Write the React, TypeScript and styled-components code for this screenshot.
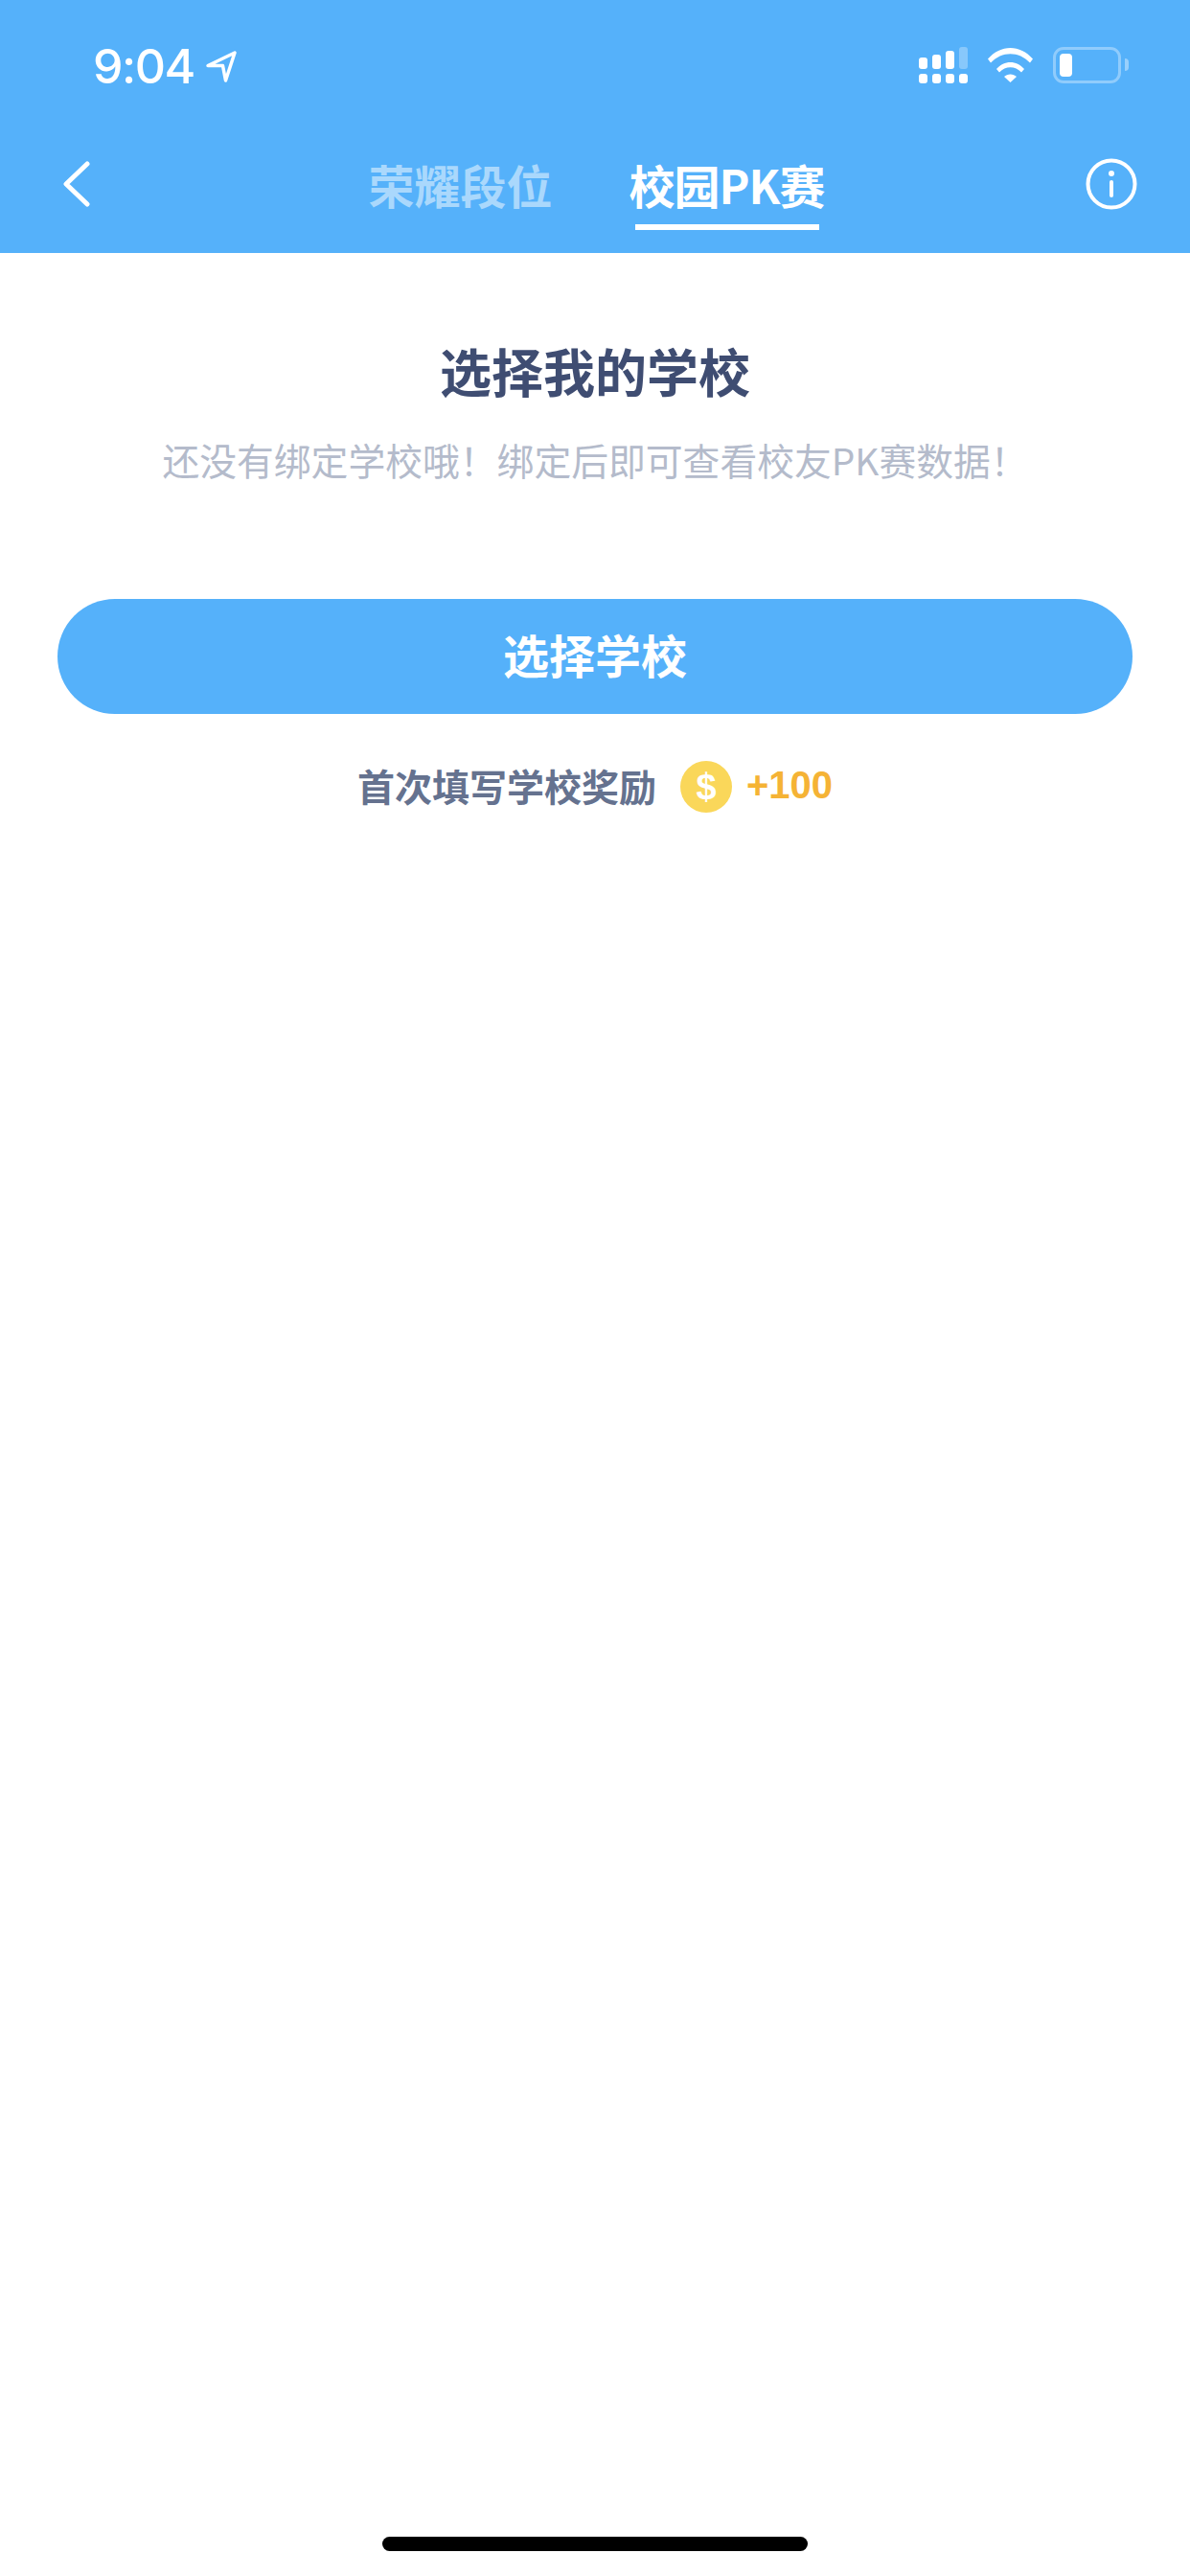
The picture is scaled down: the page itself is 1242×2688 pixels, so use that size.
import React from "react";
import styled, { createGlobalStyle } from "styled-components";

const CJK = `"Noto Sans CJK SC", "Noto Sans", sans-serif`;

const GlobalStyle = createGlobalStyle`
	html, body {
		margin: 0;
		padding: 0;
		background: #fff;
	}
`;

const signalBars = [12, 15, 19, 23];

function SignalIcon() {
	return (
		<svg width="51" height="38" viewBox="0 0 51 38" fill="#fff">
			{signalBars.map((h, i) => (
				<React.Fragment key={i}>
					<rect
						x={i * 14}
						y={23 - h}
						width="9"
						height={h}
						rx="3"
						opacity={i === 3 ? 0.3 : 1}
					/>
					<rect x={i * 14} y="28" width="9" height="10" rx="3" />
				</React.Fragment>
			))}
		</svg>
	);
}

export default function App() {
	return (
		<Page>
			<GlobalStyle />
			<Header>
				<StatusBar>
					<TimeGroup>
						<Time>9:04</Time>
						<svg width="32" height="33" viewBox="0 0 32 33" fill="none">
							<path
								d="M2 15.5 30 2 20.5 31 17.5 15.5Z"
								stroke="#fff"
								strokeWidth="3.5"
								strokeLinejoin="round"
							/>
						</svg>
					</TimeGroup>
					<StatusIcons>
						<SignalIcon />
						<svg width="47" height="37" viewBox="0 0 47 37" fill="#fff">
							<path d="M0 12.5C13-3 34-3 47 12.5L44 16.5C32.5 4 14.500 4 3 16.500Z" />
							<path d="M9 23C17 13.500 30 13.500 38 23L35 26.500C28.500 19.500 18.500 19.500 12 26.500Z" />
							<path d="M17 31C20.500 27.500 26.500 27.500 30 31L23.500 37Z" />
						</svg>
						<Battery>
							<BatteryLevel />
						</Battery>
					</StatusIcons>
				</StatusBar>
				<Nav>
					<BackSlot>
						<svg width="28" height="48" viewBox="0 0 28 48" fill="none">
							<path
								d="M25 3 3 24 25 45"
								stroke="#fff"
								strokeWidth="5"
								strokeLinecap="round"
								strokeLinejoin="round"
							/>
						</svg>
					</BackSlot>
					<Tabs>
						<Tab>
							<TabLabel>荣耀段位</TabLabel>
							<TabMark />
						</Tab>
						<Tab $active>
							<TabLabel $tight>校园PK赛</TabLabel>
							<TabMark $active />
						</Tab>
					</Tabs>
					<InfoSlot>
						<svg width="54" height="54" viewBox="0 0 54 54" fill="none">
							<circle cx="27" cy="27" r="24.500" stroke="#fff" strokeWidth="4" />
							<circle cx="27" cy="16" r="3" fill="#fff" />
							<path d="M27 25V39" stroke="#fff" strokeWidth="4" strokeLinecap="round" />
						</svg>
					</InfoSlot>
				</Nav>
			</Header>
			<Content>
				<Title>选择我的学校</Title>
				<Subtitle>还没有绑定学校哦！绑定后即可查看校友PK赛数据！</Subtitle>
				<PrimaryButton type="button">选择学校</PrimaryButton>
				<Reward>
					<RewardLabel>首次填写学校奖励</RewardLabel>
					<Coin>$</Coin>
					<RewardAmount>+100</RewardAmount>
				</Reward>
			</Content>
			<HomeIndicator />
		</Page>
	);
}

const Page = styled.div`
	display: flex;
	flex-direction: column;
	width: 1242px;
	height: 2688px;
	overflow: hidden;
	background: #fff;
	font-family: ${CJK};
`;

const Header = styled.header`
	height: 264px;
	flex: none;
	background: #55b1fa;
	box-sizing: border-box;
`;

const StatusBar = styled.div`
	display: flex;
	justify-content: space-between;
	align-items: flex-start;
	height: 160px;
	box-sizing: border-box;
	padding: 49px 64px 0 97px;
`;

const TimeGroup = styled.div`
	display: flex;
	align-items: center;
	gap: 12px;
	height: 40px;
`;

const Time = styled.span`
	font-family: Inter, "Liberation Sans", sans-serif;
	font-size: 50px;
	font-weight: 500;
	letter-spacing: -1.500px;
	color: #fff;
`;

const StatusIcons = styled.div`
	display: flex;
	align-items: flex-start;
	gap: 21px;
`;

const Battery = styled.div`
	position: relative;
	width: 71px;
	height: 38px;
	box-sizing: border-box;
	padding: 4px;
	border: 3px solid rgba(255, 255, 255, 0.35);
	border-radius: 11px;
	margin-right: 8px;

	&::after {
		content: "";
		position: absolute;
		top: 9px;
		right: -11px;
		width: 4px;
		height: 13px;
		border-radius: 0 4px 4px 0;
		background: rgba(255, 255, 255, 0.4);
	}
`;

const BatteryLevel = styled.div`
	width: 13px;
	height: 100%;
	border-radius: 4px;
	background: #fff;
`;

const Nav = styled.nav`
	display: grid;
	grid-template-columns: 1fr auto 1fr;
	align-items: flex-start;
	margin-top: 3px;
	padding: 0 55px 0 58px;
`;

const BackSlot = styled.div`
	display: flex;
	padding: 5px 0 0 8px;
`;

const InfoSlot = styled.div`
	display: flex;
	justify-content: flex-end;
	padding-top: 2px;
`;

const Tabs = styled.div`
	display: flex;
	gap: 80px;
`;

const Tab = styled.div<{ $active?: boolean }>`
	display: flex;
	flex-direction: column;
	align-items: center;
	color: ${({ $active }) => ($active ? "#fff" : "rgba(255, 255, 255, 0.5)")};
`;

const TabLabel = styled.span<{ $tight?: boolean }>`
	font-size: 48px;
	font-weight: 700;
	line-height: 58px;
	letter-spacing: ${({ $tight }) => ($tight ? "-1px" : "0")};
`;

const TabMark = styled.div<{ $active?: boolean }>`
	width: 192px;
	height: 6px;
	margin-top: 13px;
	background: ${({ $active }) => ($active ? "#fff" : "transparent")};
`;

const Content = styled.main`
	display: flex;
	flex-direction: column;
	align-items: center;
	padding: 0 60px;
`;

const Title = styled.h1`
	margin: 86px 0 0;
	font-size: 54px;
	font-weight: 700;
	line-height: 74px;
	color: #3f4d72;
`;

const Subtitle = styled.p`
	margin: 30px 0 0;
	font-size: 38.8px;
	font-weight: 400;
	line-height: 50px;
	white-space: nowrap;
	color: #b4bbcb;
`;

const PrimaryButton = styled.button`
	width: 100%;
	height: 120px;
	margin-top: 121px;
	padding: 0 0 6px;
	border: 0;
	border-radius: 60px;
	background: #55b1fa;
	font-family: inherit;
	font-size: 48px;
	font-weight: 700;
	color: #fff;
`;

const Reward = styled.div`
	display: flex;
	align-items: center;
	margin-top: 46px;
`;

const RewardLabel = styled.span`
	margin-bottom: 4px;
	font-size: 39px;
	font-weight: 700;
	color: #65728f;
`;

const Coin = styled.span`
	display: flex;
	align-items: center;
	justify-content: center;
	width: 54px;
	height: 54px;
	margin-left: 25px;
	border-radius: 50%;
	background: #fad75a;
	font-family: "Liberation Sans", sans-serif;
	font-size: 38px;
	font-weight: 700;
	color: #fff;
`;

const RewardAmount = styled.span`
	margin: 0 0 4px 15px;
	font-family: "Liberation Sans", sans-serif;
	font-size: 40px;
	font-weight: 700;
	color: #f5b335;
`;

const HomeIndicator = styled.div`
	width: 444px;
	height: 15px;
	flex: none;
	align-self: center;
	margin: auto 0 26px;
	border-radius: 8px;
	background: #000;
`;
